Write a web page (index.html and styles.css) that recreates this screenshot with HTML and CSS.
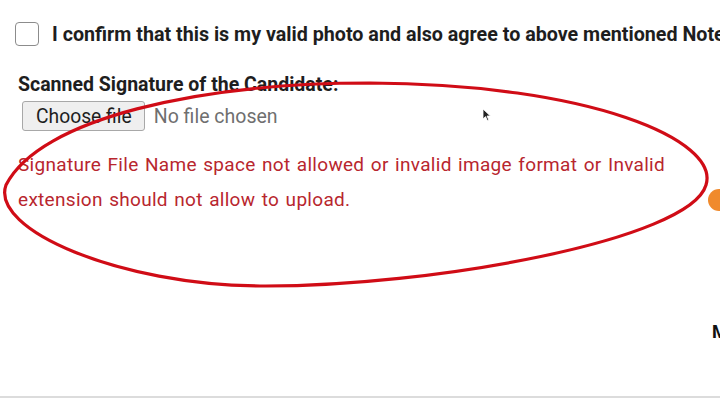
FILE: index.html
```html
<!DOCTYPE html>
<html lang="en">
<head>
<meta charset="utf-8">
<title>Signature upload</title>
<link rel="stylesheet" href="styles.css">
</head>
<body>
<main class="page">
  <label class="confirm">
    <span class="box"></span>
    <span class="confirm-text">I confirm that this is my valid photo and also agree to above mentioned Notes</span>
  </label>

  <section class="field">
    <div class="field-label">Scanned Signature of the Candidate:</div>
    <div class="file">
      <span class="file-btn">Choose file</span>
      <span class="file-name">No file chosen</span>
    </div>
    <p class="error">Signature File Name space not allowed or invalid image format or Invalid extension should not allow to upload.</p>
  </section>

  <div class="tail">
    <span></span>
    <span class="tail-text">Mobile</span>
  </div>

  <div class="rule"></div>

  <!-- hand-drawn mark around the field -->
  <svg class="mark" width="720" height="404" viewBox="0 0 720 404">
    <path d="M370 83 C200 83 40 118 6 185 C-10 230 120 285 260 286 C430 287 690 240 706 185 C720 140 590 84 370 83 Z" fill="none" stroke="#d00c16" stroke-width="3.2"/>
  </svg>

  <span class="fab"></span>

  <svg class="cursor" width="10" height="14" viewBox="0 0 10 14">
    <path d="M1 1 L1 11 L3.5 8.6 L5.4 12.6 L6.8 12 L5 8 L8.4 8 Z" fill="#222" stroke="#fff" stroke-width="0.8"/>
  </svg>
</main>
</body>
</html>
```
FILE: styles.css
```css
html, body {
  margin: 0;
  padding: 0;
  background: #fff;
}

.page {
  position: relative;
  width: 720px;
  height: 404px;
  overflow: hidden;
  font-family: Roboto, "Liberation Sans", sans-serif;
  color: #1e1e1e;
}

.confirm {
  display: flex;
  align-items: center;
  gap: 13px;
  padding: 22px 0 0 15px;
  white-space: nowrap;
}

.box {
  flex: none;
  width: 22px;
  height: 22px;
  border: 1.5px solid #8c8c8c;
  border-radius: 4px;
}

.confirm-text {
  font-weight: 700;
  font-size: 19.7px;
}

.field {
  padding: 28px 0 0 18px;
}

.field-label {
  font-weight: 700;
  font-size: 19.5px;
  line-height: 22px;
}

.file {
  display: flex;
  align-items: center;
  gap: 9px;
  margin: 5px 0 0 4px;
}

.file-btn {
  box-sizing: border-box;
  height: 30px;
  padding: 0 12px 0 13px;
  display: flex;
  align-items: center;
  font-size: 19.3px;
  color: #1e1e1e;
  background: #efefef;
  border: 1px solid #a8a8a8;
  border-radius: 3px;
}

.file-name {
  font-size: 19.5px;
  color: #6f6f6f;
}

.error {
  margin: 16px 0 0;
  width: 680px;
  font-size: 19px;
  line-height: 35px;
  letter-spacing: 0.3px;
  word-spacing: 1.4px;
  color: #b8262e;
}

.tail {
  display: grid;
  grid-template-columns: 712px 1fr;
  margin-top: 104px;
  white-space: nowrap;
}

.tail-text {
  font-weight: 700;
  font-size: 18px;
  color: #111;
}

.rule {
  position: absolute;
  left: 0;
  right: 0;
  bottom: 6px;
  height: 2px;
  background: #dcdcdc;
}

.mark {
  position: absolute;
  left: 0;
  top: 0;
  pointer-events: none;
}

.fab {
  position: absolute;
  left: 708px;
  top: 189px;
  width: 22px;
  height: 22px;
  border-radius: 50%;
  background: #f08a2c;
}

.cursor {
  position: absolute;
  left: 482px;
  top: 108px;
}
```
